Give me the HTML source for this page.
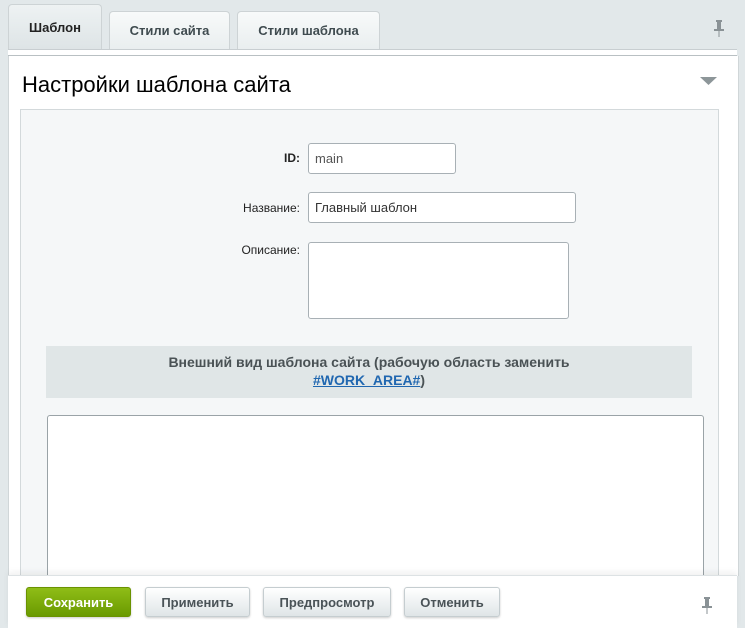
<!DOCTYPE html>
<html><head><meta charset="utf-8"><style>
body{margin:0;width:745px;height:627px;background:#e2e8ea;font-family:"Liberation Sans",Arial,sans-serif;position:relative;overflow:hidden}
.abs{position:absolute}
.tab{position:absolute;border:1px solid #cdd3d5;border-bottom:none;border-radius:4px 4px 0 0;background:linear-gradient(#f8fafa,#e9eeef);font-size:13px;font-weight:bold;color:#3f4b4f;text-align:center;box-sizing:border-box}
.inp{position:absolute;background:#fff;border:1px solid #a8b0b5;border-radius:3px;box-sizing:border-box;font-size:13px;color:#555;padding:7px 6px}
.lbl{position:absolute;font-size:12px;color:#222;text-align:right;width:120px}
.btn{position:absolute;top:587px;height:30px;border-radius:3px;box-sizing:border-box;font-size:13px;font-weight:bold;text-align:center;line-height:30px;color:#4a5357;background:linear-gradient(#fff,#dfe5e7);border:1px solid #c5cdd0;box-shadow:0 1px 2px rgba(0,0,0,.2)}
</style></head><body>
<div class="tab" style="left:8px;top:4px;width:94px;height:52px;line-height:46px;background:linear-gradient(#eef2f3,#dbe2e4);color:#222">Шаблон</div>
<div class="tab" style="left:109px;top:11px;width:121px;height:38px;line-height:38px">Стили сайта</div>
<div class="tab" style="left:237px;top:11px;width:143px;height:38px;line-height:38px">Стили шаблона</div>
<svg class="abs" style="left:713px;top:20px" width="12" height="18"><rect x="3" y="0" width="6" height="2" fill="#8a9296"/><rect x="4" y="2" width="4" height="8" fill="#8a9296"/><rect x="1" y="9" width="10" height="2" fill="#8a9296"/><rect x="5.5" y="11" width="1" height="6" fill="#8a9296"/></svg>
<div class="abs" style="left:8px;top:49px;width:729px;height:5px;background:#fff;border-top:1px solid #c8ced1;border-bottom:1px solid #b9c0c3"></div>
<div class="abs" style="left:8px;top:56px;width:729px;height:520px;background:#fff;border-left:1px solid #d0d6d8;border-right:1px solid #d0d6d8"></div>
<div class="abs" style="left:22px;top:72px;font-size:22px;color:#000">Настройки шаблона сайта</div>
<svg class="abs" style="left:700px;top:77px" width="17" height="9"><polygon points="0,0 17,0 8.5,8" fill="#8d9699"/></svg>
<div class="abs" style="left:20px;top:109px;width:697px;height:470px;background:#f5f7f8;border:1px solid #d3d9db"></div>
<div class="lbl" style="left:180px;top:151px;font-weight:bold">ID:</div>
<div class="inp" style="left:308px;top:143px;width:148px;height:31px">main</div>
<div class="lbl" style="left:180px;top:201px">Название:</div>
<div class="inp" style="left:308px;top:192px;width:268px;height:31px;color:#333">Главный шаблон</div>
<div class="lbl" style="left:180px;top:243px">Описание:</div>
<div class="inp" style="left:308px;top:242px;width:261px;height:77px"></div>
<div class="abs" style="left:46px;top:346px;width:646px;height:52px;background:#e0e6e7;text-align:center;font-size:14px;font-weight:bold;color:#4a5255;line-height:18px;padding-top:7px;box-sizing:border-box">Внешний вид шаблона сайта (рабочую область заменить<br><span style="color:#2067b0;text-decoration:underline">#WORK_AREA#</span>)</div>
<div class="abs" style="left:47px;top:415px;width:655px;height:180px;background:#fff;border:1px solid #9aa3a7;border-radius:3px"></div>
<div class="abs" style="left:8px;top:575px;width:729px;height:52px;background:#fff;border-top:1px solid #dde2e4;box-shadow:0 -3px 6px rgba(0,0,0,.06)"></div>
<div class="btn" style="left:26px;width:105px;background:linear-gradient(#8fbd17,#6a9a00);border-color:#6a9200;color:#fff">Сохранить</div>
<div class="btn" style="left:145px;width:105px">Применить</div>
<div class="btn" style="left:263px;width:128px">Предпросмотр</div>
<div class="btn" style="left:404px;width:96px">Отменить</div>
<svg class="abs" style="left:701px;top:597px" width="12" height="18"><rect x="3" y="0" width="6" height="2" fill="#8a9296"/><rect x="4" y="2" width="4" height="8" fill="#8a9296"/><rect x="1" y="9" width="10" height="2" fill="#8a9296"/><rect x="5.5" y="11" width="1" height="6" fill="#8a9296"/></svg>
</body></html>
